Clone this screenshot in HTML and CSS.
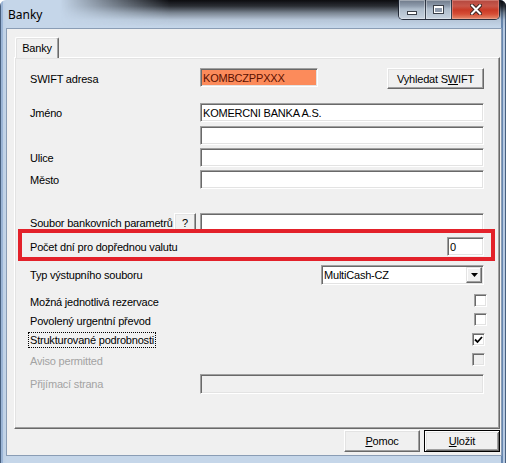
FILE: index.html
```html
<!DOCTYPE html>
<html lang="cs">
<head>
<meta charset="utf-8">
<title>Banky</title>
<link rel="stylesheet" href="styles.css">
</head>
<body>
<div class="window">
  <div class="titlebar">
    <span class="title">Banky</span>
    <div class="caption">
      <span class="cap cap-min"><span class="g-min"></span></span>
      <span class="cap cap-max"><span class="g-max"></span></span>
      <span class="cap cap-close">
        <svg width="12" height="11" viewBox="0 0 12 11"><path d="M2 1.5 L10 9.5 M10 1.5 L2 9.5" stroke="#3a2420" stroke-width="4" stroke-linecap="square"/><path d="M2 1.5 L10 9.5 M10 1.5 L2 9.5" stroke="#fff" stroke-width="2" stroke-linecap="square"/></svg>
      </span>
    </div>
  </div>
  <div class="client">
    <div class="tabstrip"><div class="tab">Banky</div></div>
    <div class="panel">
      <div class="row r-swift">
        <span class="lbl">SWIFT adresa</span>
        <span class="edit swift">KOMBCZPPXXX</span>
        <span class="btn btn-search">Vyhledat S<u>W</u>IFT</span>
      </div>
      <div class="row r-edit r-name"><span class="lbl">Jméno</span><span class="edit wide">KOMERCNI BANKA A.S.</span></div>
      <div class="row r-edit r-name2"><span class="lbl"></span><span class="edit wide"></span></div>
      <div class="row r-edit r-street"><span class="lbl">Ulice</span><span class="edit wide"></span></div>
      <div class="row r-edit r-city"><span class="lbl">Město</span><span class="edit wide"></span></div>
      <div class="row r-file"><span class="lbl lbl-file">Soubor bankovních parametrů</span><span class="btn btn-q">?</span><span class="edit wide"></span></div>
      <div class="row r-edit r-days"><span class="lbl lbl-grow">Počet dní pro dopřednou valutu</span><span class="edit num">0</span></div>
      <div class="row r-type">
        <span class="lbl lbl-type">Typ výstupního souboru</span>
        <span class="combo"><span class="combo-text">MultiCash-CZ</span><span class="combo-btn"><svg width="7" height="4" viewBox="0 0 7 4"><path d="M0 0 H7 L3.5 4 Z" fill="#000"/></svg></span></span>
      </div>
      <div class="row r-chk r-c1"><span class="lbl lbl-grow">Možná jednotlivá rezervace</span><span class="chk"></span></div>
      <div class="row r-chk r-c2"><span class="lbl lbl-grow">Povolený urgentní převod</span><span class="chk"></span></div>
      <div class="row r-chk r-c3"><span class="lbl lbl-grow"><span class="focus">Strukturované podrobnosti</span></span><span class="chk chk-alt"><svg width="9" height="9" viewBox="0 0 9 9"><path d="M1 4.5 L3.5 7 L8 2" fill="none" stroke="#000" stroke-width="1.8"/></svg></span></div>
      <div class="row r-chk r-c4"><span class="lbl lbl-grow dis">Aviso permitted</span><span class="chk chk-alt chk-dis"></span></div>
      <div class="row r-recv"><span class="lbl dis">Přijímací strana</span><span class="edit wide edit-dis"></span></div>
    </div>
    <div class="footer">
      <span class="btn btn-foot"><span><u>P</u>omoc</span></span>
      <span class="btn btn-foot btn-default"><span><u>U</u>ložit</span></span>
    </div>
  </div>
</div>
</body>
</html>
```

FILE: styles.css
```css
* { box-sizing: border-box; }
html, body { margin: 0; padding: 0; }
body {
  width: 506px;
  height: 463px;
  overflow: hidden;
  background: #fff;
  font-family: "Liberation Sans", Arial, sans-serif;
  font-size: 11px;
  letter-spacing: -0.2px;
  color: #000;
}

.window {
  width: 506px;
  height: 463px;
  display: flex;
  flex-direction: column;
  position: relative;
  overflow: hidden;
  border-radius: 6px 6px 0 0;
  background: linear-gradient(to right,
    #48607f 0, #48607f 1px,
    #9bb5d6 1px, #9bb5d6 3px,
    #bfd1e6 3px, #c5d6e9 7px,
    #c5d6e9 calc(100% - 5px),
    #6787b0 calc(100% - 5px), #6787b0 calc(100% - 3px),
    #b7cae2 calc(100% - 3px), #b7cae2 calc(100% - 1px),
    #48607f calc(100% - 1px));
}

.titlebar {
  height: 29px;
  flex: none;
  display: flex;
  justify-content: space-between;
  align-items: flex-start;
  position: relative;
}
.titlebar::before {
  content: "";
  position: absolute;
  left: 0; right: 0; top: 0;
  height: 27px;
  background: linear-gradient(to bottom, rgba(5,5,8,0.97) 0, rgba(15,16,20,0.85) 6px, rgba(50,55,62,0.5) 13px, rgba(100,110,122,0.15) 20px, rgba(120,130,140,0) 27px);
  -webkit-mask-image: linear-gradient(to right, transparent 60px, #000 170px, #000 100%);
  mask-image: linear-gradient(to right, transparent 60px, #000 170px, #000 100%);
}
.title {
  position: relative;
  margin: 7px 0 0 8px;
  font-family: "Noto Sans", "Open Sans", sans-serif;
  font-size: 12px;
  letter-spacing: 0;
  line-height: 16px;
  color: #000;
}

.caption {
  position: relative;
  display: flex;
  height: 20px;
  margin-right: 6px;
  border: 1px solid rgba(25,32,45,0.9);
  border-top: none;
  border-radius: 0 0 5px 5px;
  overflow: hidden;
}
.cap {
  height: 19px;
  display: flex;
  align-items: center;
  justify-content: center;
}
.cap-min, .cap-max {
  background: linear-gradient(to bottom, #6d7888 0, #8f9cad 6px, #aebccb 9px, #bac7d5 14px, #c9d4e0 19px);
  box-shadow: inset 0 0 0 1px rgba(255,255,255,0.35);
}
.cap-min { width: 27px; border-right: 1px solid rgba(25,32,45,0.8); }
.cap-max { width: 26px; border-right: 1px solid rgba(25,32,45,0.8); }
.cap-close {
  width: 47px;
  background: linear-gradient(to bottom, #b2473e 0, #c8574a 6px, #c93a26 10px, #d64d35 14px, #e48b6c 19px);
  box-shadow: inset 0 0 0 1px rgba(255,200,190,0.35);
}
.g-min {
  width: 10px;
  height: 4px;
  margin-top: 6px;
  background: #fff;
  border: 1px solid #3a3f48;
}
.g-max {
  width: 11px;
  height: 9px;
  border: 1px solid #3a3f48;
  background: #8e9aab;
  box-shadow: inset 0 2px 0 #fff, inset 1px 0 0 #fff, inset -1px 0 0 #fff, inset 0 -1px 0 #fff;
}

.client {
  margin-left: 7px;
  width: 494px;
  height: 426px;
  flex: none;
  background: #f0f0f0;
  box-shadow: 0 0 0 1px #8a9db5;
  display: flex;
  flex-direction: column;
}

.tabstrip {
  height: 28px;
  flex: none;
  display: flex;
  align-items: flex-start;
}
.tab {
  position: relative;
  z-index: 1;
  margin: 8px 0 0 8px;
  width: 44px;
  height: 21px;
  background: #f0f0f0;
  border-top: 1px solid #fff;
  border-left: 1px solid #fff;
  border-right: 1px solid #696969;
  border-radius: 2px 2px 0 0;
  box-shadow: inset -1px 0 0 #a0a0a0, inset 1px 1px 0 #e3e3e3;
  display: flex;
  align-items: center;
  justify-content: center;
  padding-bottom: 1px;
}

.panel {
  margin-left: 7px;
  margin-right: 1px;
  height: 372px;
  flex: none;
  border: 1px solid;
  border-color: #fff #696969 #696969 #fff;
  box-shadow: inset -1px -1px 0 #a0a0a0, inset 1px 1px 0 #e3e3e3;
  padding: 10px 0 0 15px;
  display: flex;
  flex-direction: column;
}

.row {
  width: 454px;
  display: flex;
  align-items: center;
  flex: none;
}
.lbl {
  width: 170px;
  flex: none;
  white-space: nowrap;
  line-height: 14px;
}
.lbl-grow { flex: 1; width: auto; }
.lbl-file { width: 144px; }
.lbl-type { width: 291px; }
.dis { color: #a3a3a3; }

.r-swift { height: 21px; align-items: flex-start; }
.r-swift .lbl { align-self: center; }
.r-edit { height: 19px; }
.r-name { margin-top: 14px; }
.r-name2 { margin-top: 4px; }
.r-street { margin-top: 3px; }
.r-city { margin-top: 3px; }
.r-file { height: 20px; margin-top: 24px; }
.r-days { margin-top: 4px; position: relative; }
.r-days::after {
  content: "";
  position: absolute;
  left: -12px;
  right: -11px;
  top: -8px;
  bottom: -5px;
  border: 4px solid #e3212a;
  pointer-events: none;
}
.r-type { height: 20px; margin-top: 9px; }
.r-chk { height: 13px; }
.r-chk .lbl { padding-top: 2px; }
.r-c1 { margin-top: 9px; }
.r-c2 { margin-top: 6px; }
.r-c3 { margin-top: 7px; }
.r-c4 { margin-top: 7px; }
.r-recv { height: 20px; margin-top: 8px; }

.edit {
  height: 19px;
  flex: none;
  background: #fff;
  border: 1px solid;
  border-color: #a0a0a0 #fff #fff #a0a0a0;
  box-shadow: inset 1px 1px 0 #696969, inset -1px -1px 0 #e3e3e3;
  padding-left: 2px;
  display: flex;
  align-items: center;
  white-space: nowrap;
}
.wide { width: 284px; }
.r-file .edit, .r-recv .edit { height: 20px; }
.swift {
  width: 118px;
  background: #fc8b5b;
  color: #5a1000;
}
.num { width: 37px; }
.edit-dis { background: #f0f0f0; }

.btn {
  flex: none;
  display: flex;
  align-items: center;
  justify-content: center;
  background: #f0f0f0;
  border: 1px solid;
  border-color: #fff #696969 #696969 #fff;
  box-shadow: inset -1px -1px 0 #a0a0a0, inset 1px 1px 0 #e3e3e3;
  white-space: nowrap;
}
.btn-search {
  width: 97px;
  height: 21px;
  margin-left: 69px;
}
.btn-q {
  width: 22px;
  height: 19px;
  margin-right: 4px;
  align-self: flex-start;
}

.combo {
  width: 163px;
  height: 20px;
  flex: none;
  background: #fff;
  border: 1px solid;
  border-color: #a0a0a0 #fff #fff #a0a0a0;
  box-shadow: inset 1px 1px 0 #696969, inset -1px -1px 0 #e3e3e3;
  display: flex;
  align-items: center;
}
.combo-text { flex: 1; padding-left: 2px; }
.combo-btn {
  width: 16px;
  height: 16px;
  margin-right: 1px;
  display: flex;
  align-items: center;
  justify-content: center;
  background: #f0f0f0;
  border: 1px solid;
  border-color: #e3e3e3 #696969 #696969 #e3e3e3;
  box-shadow: inset -1px -1px 0 #a0a0a0, inset 1px 1px 0 #fff;
}

.chk {
  width: 13px;
  height: 13px;
  flex: none;
  margin-right: -3px;
  background: #fff;
  border: 1px solid;
  border-color: #a0a0a0 #fff #fff #a0a0a0;
  box-shadow: inset 1px 1px 0 #696969, inset -1px -1px 0 #e3e3e3;
  display: flex;
  align-items: center;
  justify-content: center;
}
.chk-alt { margin-right: -1px; }
.chk-dis { background: #f0f0f0; }

.focus {
  display: inline-block;
  border: 1px dotted #000;
  padding: 0 1px;
  margin-left: -2px;
  margin-top: -2px;
  line-height: 14px;
}

.footer {
  flex: 1;
  display: flex;
  justify-content: flex-end;
  align-items: flex-start;
  gap: 4px;
  padding: 1px 1px 0 0;
}
.btn-foot {
  width: 76px;
  height: 22px;
}
.btn-default {
  border: 1px solid #000;
  box-shadow: inset 1px 1px 0 #fff, inset -1px -1px 0 #696969, inset 2px 2px 0 #e3e3e3, inset -2px -2px 0 #a0a0a0;
}
```
